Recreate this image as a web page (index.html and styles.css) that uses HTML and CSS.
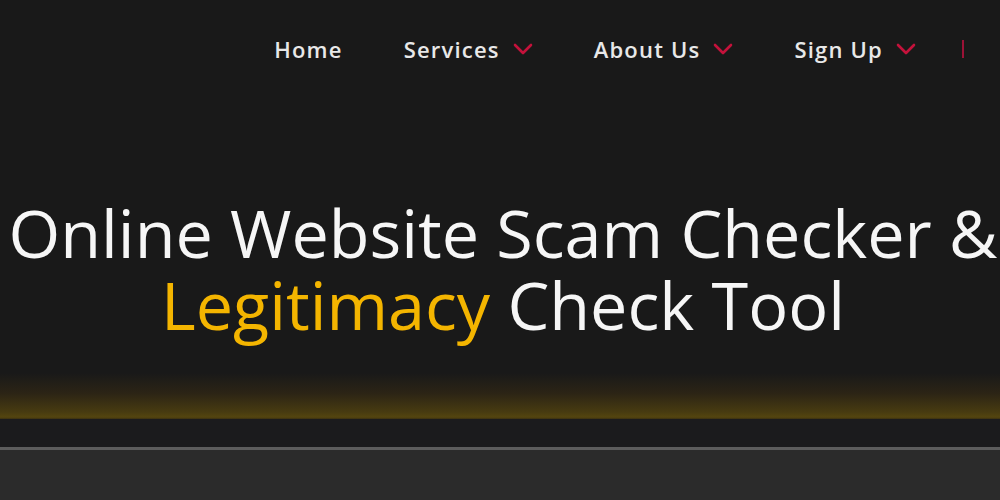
FILE: index.html
```html
<!DOCTYPE html>
<html lang="en">
<head>
<meta charset="utf-8">
<title>Online Website Scam Checker</title>
<link rel="stylesheet" href="styles.css">
</head>
<body>
<header class="site-header">
  <nav class="main-nav">
    <a class="nav-item" href="#">Home</a>
    <a class="nav-item" href="#">Services
      <svg class="chev" viewBox="0 0 20 12" aria-hidden="true"><path d="M2 2 L10 10 L18 2"/></svg>
    </a>
    <a class="nav-item" href="#">About Us
      <svg class="chev" viewBox="0 0 20 12" aria-hidden="true"><path d="M2 2 L10 10 L18 2"/></svg>
    </a>
    <a class="nav-item" href="#">Sign Up
      <svg class="chev" viewBox="0 0 20 12" aria-hidden="true"><path d="M2 2 L10 10 L18 2"/></svg>
    </a>
    <span class="nav-divider"></span>
  </nav>
</header>
<section class="hero">
  <h1 class="hero-title"><span class="line">Online Website Scam Checker &amp;</span><span class="line"><span class="accent">Legitimacy</span> Check Tool</span></h1>
</section>
<div class="strip"></div>
<section class="next-section"></section>
</body>
</html>
```
FILE: styles.css
```css
html, body {
  margin: 0;
  padding: 0;
  background: #191919;
  font-family: "Open Sans", "Liberation Sans", sans-serif;
  color: #f4f4f4;
  overflow: hidden;
}

.site-header {
  height: 98px;
  display: flex;
  align-items: center;
  justify-content: flex-end;
  padding-right: 36px;
}

.main-nav {
  display: flex;
  align-items: center;
  gap: 61px;
}

.nav-item {
  display: flex;
  align-items: center;
  gap: 13px;
  color: #e8e8e8;
  text-decoration: none;
  font-size: 22px;
  font-weight: 600;
  letter-spacing: 1.2px;
  line-height: 1;
}

.chev {
  width: 20px;
  height: 12px;
  fill: none;
  stroke: #c4123b;
  stroke-width: 2.6;
  stroke-linecap: round;
  stroke-linejoin: round;
}

.nav-divider {
  width: 2px;
  height: 18px;
  background: #9c1236;
  margin-left: -15px;
}

.hero {
  height: 321px;
  box-sizing: border-box;
  padding-top: 98px;
  text-align: center;
  background:
    linear-gradient(180deg, rgba(74, 60, 14, 0) 0%, rgba(60, 46, 18, 0.55) 45%, rgba(74, 61, 16, 0.95) 85%, #54450f 96%, #3a3012 100%) bottom / 100% 46px no-repeat,
    #191919;
}

.hero-title {
  margin: 0;
  padding-left: 6px;
  font-size: 66.5px;
  font-weight: 400;
  line-height: 72px;
  color: #f6f6f6;
  letter-spacing: 0;
}

.line {
  display: block;
  white-space: nowrap;
}

.accent {
  color: #f4b500;
}

.strip {
  height: 28px;
  background: #1b1b1d;
}

.next-section {
  height: 60px;
  background: #2b2b2b;
  border-top: 3px solid #5d5d5d;
}
```
